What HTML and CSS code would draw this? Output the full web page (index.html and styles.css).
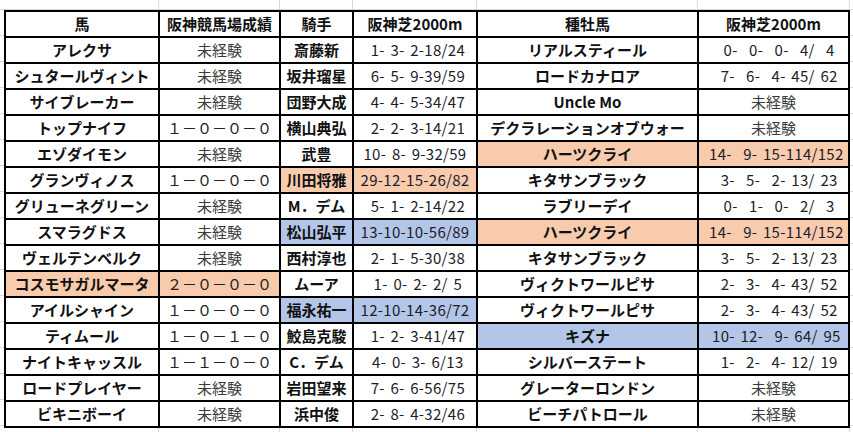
FILE: index.html
```html
<!DOCTYPE html>
<html lang="ja">
<head>
<meta charset="utf-8">
<title>阪神芝2000m</title>
<link rel="stylesheet" href="styles.css">
</head>
<body>
<div class="sheet">
<table class="grid">
<colgroup>
<col class="c1"><col class="c2"><col class="c3"><col class="c4"><col class="c5"><col class="c6">
</colgroup>
<thead>
<tr><th>馬</th><th>阪神競馬場成績</th><th>騎手</th><th>阪神芝2000m</th><th>種牡馬</th><th>阪神芝2000m</th></tr>
</thead>
<tbody>
<tr><td class="nm">アレクサ</td><td class="nx">未経験</td><td class="jk">斎藤新</td><td class="num"> 1- 3- 2-18/24</td><td class="nm">リアルスティール</td><td class="num">  0-  0-  0-  4/  4</td></tr>
<tr><td class="nm">シュタールヴィント</td><td class="nx">未経験</td><td class="jk">坂井瑠星</td><td class="num"> 6- 5- 9-39/59</td><td class="nm">ロードカナロア</td><td class="num">  7-  6-  4- 45/ 62</td></tr>
<tr><td class="nm">サイブレーカー</td><td class="nx">未経験</td><td class="jk">団野大成</td><td class="num"> 4- 4- 5-34/47</td><td class="nm">Uncle Mo</td><td class="nx">未経験</td></tr>
<tr><td class="nm">トップナイフ</td><td class="fw">１－０－０－０</td><td class="jk">横山典弘</td><td class="num"> 2- 2- 3-14/21</td><td class="nm">デクラレーションオブウォー</td><td class="nx">未経験</td></tr>
<tr><td class="nm">エゾダイモン</td><td class="nx">未経験</td><td class="jk">武豊</td><td class="num">10- 8- 9-32/59</td><td class="nm hl-o">ハーツクライ</td><td class="num hl-o"> 14-  9- 15-114/152</td></tr>
<tr><td class="nm">グランヴィノス</td><td class="fw">１－０－０－０</td><td class="jk hl-o">川田将雅</td><td class="num hl-o">29-12-15-26/82</td><td class="nm">キタサンブラック</td><td class="num">  3-  5-  2- 13/ 23</td></tr>
<tr><td class="nm">グリューネグリーン</td><td class="nx">未経験</td><td class="jk">M．デム</td><td class="num"> 5- 1- 2-14/22</td><td class="nm">ラブリーデイ</td><td class="num">  0-  1-  0-  2/  3</td></tr>
<tr><td class="nm">スマラグドス</td><td class="nx">未経験</td><td class="jk hl-b">松山弘平</td><td class="num hl-b">13-10-10-56/89</td><td class="nm hl-o">ハーツクライ</td><td class="num hl-o"> 14-  9- 15-114/152</td></tr>
<tr><td class="nm">ヴェルテンベルク</td><td class="nx">未経験</td><td class="jk">西村淳也</td><td class="num"> 2- 1- 5-30/38</td><td class="nm">キタサンブラック</td><td class="num">  3-  5-  2- 13/ 23</td></tr>
<tr><td class="nm hl-o">コスモサガルマータ</td><td class="fw hl-o">２－０－０－０</td><td class="jk">ムーア</td><td class="num"> 1- 0- 2- 2/ 5</td><td class="nm">ヴィクトワールピサ</td><td class="num">  2-  3-  4- 43/ 52</td></tr>
<tr><td class="nm">アイルシャイン</td><td class="fw">１－０－０－０</td><td class="jk hl-b">福永祐一</td><td class="num hl-b">12-10-14-36/72</td><td class="nm">ヴィクトワールピサ</td><td class="num">  2-  3-  4- 43/ 52</td></tr>
<tr><td class="nm">ティムール</td><td class="fw">１－０－１－０</td><td class="jk">鮫島克駿</td><td class="num"> 1- 2- 3-41/47</td><td class="nm hl-b">キズナ</td><td class="num hl-b"> 10- 12-  9- 64/ 95</td></tr>
<tr><td class="nm">ナイトキャッスル</td><td class="fw">１－１－０－０</td><td class="jk">C．デム</td><td class="num"> 4- 0- 3- 6/13</td><td class="nm">シルバーステート</td><td class="num">  1-  2-  4- 12/ 19</td></tr>
<tr><td class="nm">ロードプレイヤー</td><td class="nx">未経験</td><td class="jk">岩田望来</td><td class="num"> 7- 6- 6-56/75</td><td class="nm">グレーターロンドン</td><td class="nx">未経験</td></tr>
<tr><td class="nm">ビキニボーイ</td><td class="nx">未経験</td><td class="jk">浜中俊</td><td class="num"> 2- 8- 4-32/46</td><td class="nm">ビーチパトロール</td><td class="nx">未経験</td></tr>
</tbody>
</table>
</div>
</body>
</html>
```
FILE: styles.css
```css
html, body {
  margin: 0;
  padding: 0;
  background: #ffffff;
}

body {
  font-family: "Noto Sans CJK JP", "Noto Sans", sans-serif;
  color: #111;
}

.sheet {
  width: 853px;
  height: 432px;
  box-sizing: border-box;
  padding: 10px 0 0 4px;
  background-color: #fff;
  background-image:
    linear-gradient(#dadada, #dadada),
    linear-gradient(#dadada, #dadada),
    linear-gradient(#dadada, #dadada),
    linear-gradient(#dadada, #dadada),
    linear-gradient(#dadada, #dadada),
    linear-gradient(#dadada, #dadada),
    repeating-linear-gradient(to bottom, transparent 0 9px, #dadada 9px 10px, transparent 10px 26px);
  background-size: 1px 100%, 1px 100%, 1px 100%, 1px 100%, 1px 100%, 1px 100%, 100% 100%;
  background-position: 158px 0, 279px 0, 352px 0, 476px 0, 697px 0, 849px 0, 0 0;
  background-repeat: no-repeat;
}

.grid {
  border-collapse: collapse;
  table-layout: fixed;
  width: 844px;
  background: #fff;
}

.c1 { width: 154px; }
.c2 { width: 121px; }
.c3 { width: 73px; }
.c4 { width: 124px; }
.c5 { width: 221px; }
.c6 { width: 151px; }

.grid th,
.grid td {
  border: 2px solid #000;
  height: 24px;
  padding: 0;
  text-align: center;
  vertical-align: middle;
  font-size: 15px;
  line-height: 20px;
  white-space: pre;
  overflow: hidden;
}

.grid th {
  font-weight: 700;
  color: #111;
}

.nm {
  font-weight: 700;
  color: #111;
}

.jk {
  font-weight: 700;
  color: #111;
}

.nx {
  font-weight: 400;
  color: #3a3a3a;
}

.fw {
  font-weight: 400;
  color: #222;
  font-size: 14px;
}

.num {
  font-weight: 400;
  color: #1c1c2a;
  letter-spacing: 0.3px;
  word-spacing: 2px;
}

.hl-o { background: #f8cbad; }
.hl-b { background: #b4c6e7; }
```
